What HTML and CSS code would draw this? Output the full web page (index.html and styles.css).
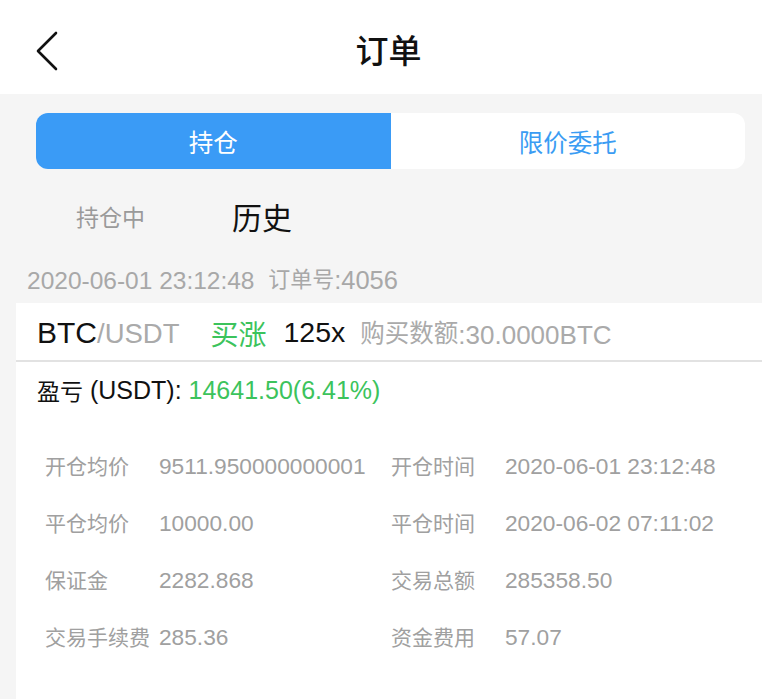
FILE: index.html
```html
<!DOCTYPE html>
<html lang="zh-CN">
<head>
<meta charset="utf-8">
<link rel="stylesheet" href="styles.css">
</head>
<body>
<header class="nav">
  <span class="back"><svg width="24" height="40" viewBox="0 0 24 40"><path d="M21 2 L3 20 L21 38" fill="none" stroke="#111" stroke-width="2.6" stroke-linecap="round" stroke-linejoin="round"/></svg></span>
  <h1 class="title">订单</h1>
</header>
<main class="page">
  <div class="seg">
    <div class="seg-item active">持仓</div>
    <div class="seg-item">限价委托</div>
  </div>
  <div class="subtabs">
    <span class="sub">持仓中</span>
    <span class="sub on">历史</span>
  </div>
  <div class="meta">2020-06-01 23:12:48&nbsp; <span class="cj">订单号</span><span class="tail">:4056</span></div>
  <section class="card">
    <div class="card-head">
      <span class="pair"><b>BTC</b><i>/USDT</i></span>
      <span class="dir">买涨</span>
      <span class="lev">125x</span>
      <span class="amt"><span class="cj">购买数额</span>:30.0000BTC</span>
    </div>
    <div class="pnl"><span class="cj">盈亏</span> (USDT): <span class="up">14641.50(6.41%)</span></div>
    <div class="grid">
      <span class="k">开仓均价</span><span class="v">9511.950000000001</span>
      <span class="k">开仓时间</span><span class="v">2020-06-01 23:12:48</span>
      <span class="k">平仓均价</span><span class="v">10000.00</span>
      <span class="k">平仓时间</span><span class="v">2020-06-02 07:11:02</span>
      <span class="k">保证金</span><span class="v">2282.868</span>
      <span class="k">交易总额</span><span class="v">285358.50</span>
      <span class="k">交易手续费</span><span class="v">285.36</span>
      <span class="k">资金费用</span><span class="v">57.07</span>
    </div>
  </section>
</main>
</body>
</html>
```

FILE: styles.css
```css
* { box-sizing: border-box; }
html, body { margin: 0; padding: 0; }
body {
  width: 762px;
  height: 699px;
  overflow: hidden;
  background: #f5f5f5;
  font-family: "Liberation Sans", "Noto Sans CJK SC", sans-serif;
  color: #111;
}
.cj { font-family: "Noto Sans CJK SC", sans-serif; vertical-align: 2px; }
.nav {
  height: 94px;
  background: #fff;
  display: flex;
  align-items: center;
  justify-content: center;
  position: relative;
}
.back {
  position: absolute;
  left: 35px;
  top: 31px;
  width: 24px;
  height: 40px;
}
.title {
  margin: 4px 0 0 15px;
  font-size: 33px;
  font-weight: 500;
  font-family: "Noto Sans CJK SC", sans-serif;
}
.page { padding: 19px 0 0 0; }
.seg {
  margin: 0 17px 0 36px;
  height: 56px;
  display: flex;
  border-radius: 12px;
  overflow: hidden;
  background: #fff;
}
.seg-item {
  flex: 1;
  display: flex;
  align-items: center;
  justify-content: center;
  font-family: "Noto Sans CJK SC", sans-serif;
  font-size: 24.5px;
  color: #3a9cf3;
}
.seg-item.active { background: #3a9bf6; color: #fff; }
.subtabs {
  display: flex;
  align-items: center;
  height: 72px;
  margin-top: 11px;
  padding-left: 76px;
  gap: 87px;
  font-family: "Noto Sans CJK SC", sans-serif;
}
.sub { font-size: 23px; color: #9a9a9a; }
.sub.on { font-size: 30px; color: #111; }
.meta {
  padding-left: 27px;
  margin-top: 1px;
  height: 50px;
  line-height: 54px;
  font-size: 24.5px;
  color: #a8a8a8;
  white-space: pre;
  overflow: hidden;
}
.meta .cj { font-size: 22px; line-height: 1; }
.meta .tail { font-size: 25.5px; }
.card {
  margin-left: 16px;
  background: #fff;
  height: 400px;
}
.card-head {
  height: 59px;
  display: flex;
  align-items: center;
  padding: 2px 0 0 21px;
  border-bottom: 2px solid #e2e2e2;
  white-space: nowrap;
}
.pair b { font-weight: 400; font-size: 30px; color: #111; }
.pair i { font-style: normal; font-size: 27.5px; color: #aaa; }
.dir { margin-left: 31px; font-size: 28px; color: #3cc35c; font-family: "Noto Sans CJK SC", sans-serif; }
.lev { margin-left: 17px; font-size: 28.5px; color: #111; }
.amt { margin-left: 15px; font-size: 26px; color: #aaa; }
.amt .cj { font-size: 24.5px; }
.pnl {
  height: 56px;
  display: flex;
  align-items: center;
  padding-left: 21px;
  font-size: 25px;
  color: #111;
  white-space: pre;
}
.pnl .cj { font-size: 23px; }
.pnl .up { color: #3cc35c; }
.grid {
  display: grid;
  grid-template-columns: 114px 232px 114px 1fr;
  grid-auto-rows: 57px;
  padding-left: 29px;
  margin-top: 20px;
  align-items: center;
  font-size: 22.7px;
  color: #a0a0a0;
  white-space: nowrap;
}
.k { font-family: "Noto Sans CJK SC", sans-serif; font-size: 21px; margin-bottom: 4px; }
```
